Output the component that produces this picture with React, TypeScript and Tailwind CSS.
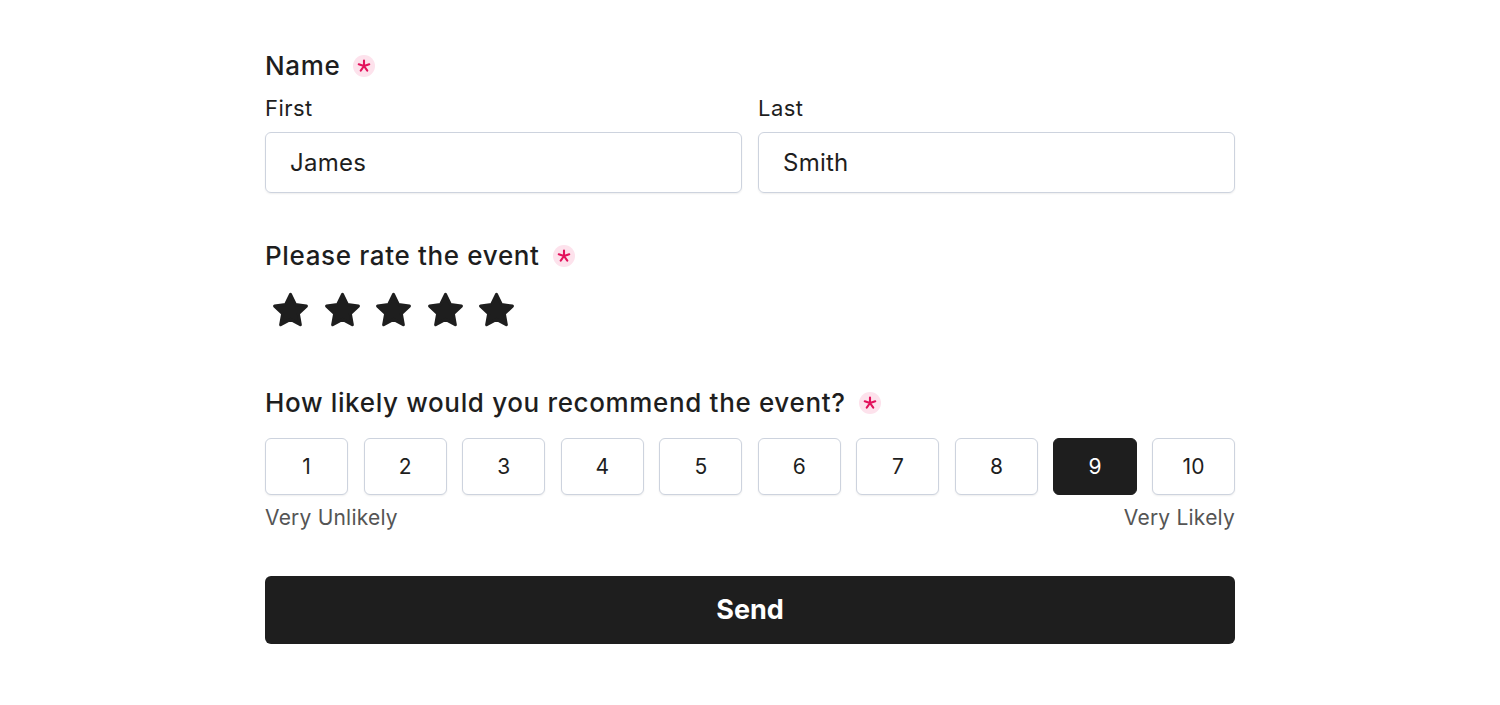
import { useState } from "react";

const Required = () => (
  <span className="ml-[13px] inline-flex h-[22px] w-[22px] items-center justify-center rounded-full bg-[#fde2ec] text-[#e3125c]">
    <svg width="14" height="14" viewBox="0 0 24 24" fill="none" stroke="currentColor" strokeWidth="3.6" strokeLinecap="round">
      <path d="M12 2.5v9.5M12 12l9-3M12 12l-9-3M12 12l5.6 7.8M12 12l-5.6 7.8" />
    </svg>
  </span>
);

const Star = () => (
  <svg width="41" height="41" viewBox="0 0 24 24" fill="#1e1e1e" stroke="#1e1e1e" strokeWidth="1.8" strokeLinejoin="round">
    <path d="M12 2.6l2.85 5.9 6.45.9-4.7 4.5 1.15 6.4L12 17.2l-5.75 3.1 1.15-6.4-4.7-4.5 6.45-.9z" />
  </svg>
);

const inputCls =
  "mt-[9px] h-[61px] w-full rounded-md border border-[#cdd3de] px-6 text-[24px] tracking-[0.01em] shadow-[0_1px_2px_rgba(0,0,0,0.07)] outline-none";

const headingCls = "flex items-center text-[26px] font-medium leading-[36px] tracking-[0.025em]";

export default function App() {
  const [first, setFirst] = useState("James");
  const [last, setLast] = useState("Smith");
  const [score, setScore] = useState(9);

  return (
    <div className="min-h-screen bg-white text-[#1e1e1e]" style={{ fontFamily: "Inter, 'Noto Sans', sans-serif" }}>
      <div className="mx-auto w-[970px] pt-[48px]">
        {/* name */}
        <div className={headingCls}>
          Name
          <Required />
        </div>
        <div className="mt-[9px] grid grid-cols-2 gap-4">
          <div>
            <div className="text-[22px] leading-[30px] tracking-[0.02em]">First</div>
            <input value={first} onChange={(e) => setFirst(e.target.value)} className={inputCls} />
          </div>
          <div>
            <div className="text-[22px] leading-[30px] tracking-[0.02em]">Last</div>
            <input value={last} onChange={(e) => setLast(e.target.value)} className={inputCls} />
          </div>
        </div>

        {/* rating */}
        <div className={`mt-[45px] ${headingCls}`}>
          Please rate the event
          <Required />
        </div>
        <div className="mt-[16px] flex gap-[10.5px] pl-[5px]">
          {[1, 2, 3, 4, 5].map((i) => (
            <Star key={i} />
          ))}
        </div>

        {/* nps */}
        <div className={`mt-[54px] ${headingCls}`}>
          How likely would you recommend the event?
          <Required />
        </div>
        <div className="mt-[17px] flex gap-[15.4px]">
          {[1, 2, 3, 4, 5, 6, 7, 8, 9, 10].map((n) => (
            <button
              key={n}
              onClick={() => setScore(n)}
              className={
                n === score
                  ? "h-[57px] flex-1 rounded-md border border-[#1e1e1e] bg-[#1e1e1e] text-[21px] text-white"
                  : "h-[57px] flex-1 rounded-md border border-[#cdd3de] bg-white text-[21px] text-[#1e1e1e] shadow-[0_1px_2px_rgba(0,0,0,0.07)]"
              }
            >
              {n}
            </button>
          ))}
        </div>
        <div className="mt-[8px] flex justify-between text-[21px] leading-[30px] tracking-[0.01em] text-[#555555]">
          <span>Very Unlikely</span>
          <span>Very Likely</span>
        </div>

        <button className="mt-[43px] h-[68px] w-full rounded-md bg-[#1e1e1e] text-[27px] font-bold text-white">
          Send
        </button>
      </div>
    </div>
  );
}
